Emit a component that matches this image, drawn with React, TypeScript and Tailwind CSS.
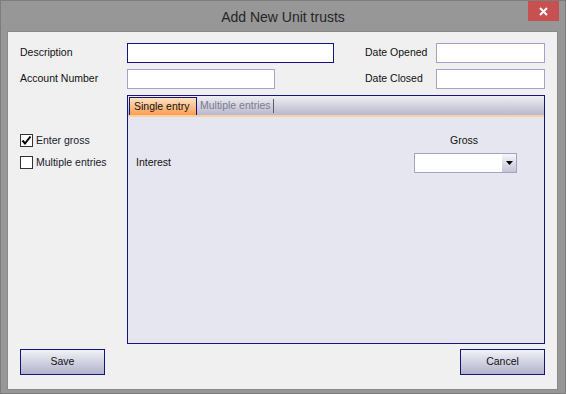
import React from "react";

const font = { fontFamily: '"Liberation Sans", Arial, sans-serif' };

function TextBox({ w, focused }: { w: string; focused?: boolean }) {
  return (
    <div
      className={`${w} h-[20px] bg-white border ${
        focused ? "border-[#14147e]" : "border-[#a6a1c7]"
      }`}
    />
  );
}

function CheckBox({ label, checked }: { label: string; checked?: boolean }) {
  return (
    <div className="flex items-center h-[13px] gap-[3px]">
      <div className="w-[13px] h-[13px] bg-white border border-[#333333] flex items-center justify-center">
        {checked && (
          <svg width="11" height="11" viewBox="0 0 11 11">
            <path d="M1.5 5.5 L4 8.5 L9.5 1.5" fill="none" stroke="#000" strokeWidth="2" />
          </svg>
        )}
      </div>
      <span className="text-[#1a1a2e] leading-[13px]">{label}</span>
    </div>
  );
}

function Button({ label }: { label: string }) {
  return (
    <div className="w-[85px] h-[26px] border border-[#14147e] bg-gradient-to-b from-[#f2f2f8] to-[#b3b3cc] flex items-center justify-center text-[#111]">
      {label}
    </div>
  );
}

export default function App() {
  return (
    <div
      className="w-[566px] h-[394px] bg-[#979797] border border-[#7d7d7d] box-border flex flex-col text-[10.5px]"
      style={font}
    >
      {/* Title bar */}
      <div className="relative h-[30px] flex items-center justify-center">
        <span className="text-[14px] text-[#262626] leading-[30px] pt-[1px]">Add New Unit trusts</span>
        <div className="absolute top-0 right-[6px] w-[31px] h-[20px] bg-[#c75050] flex items-center justify-center">
          <svg width="9" height="9" viewBox="0 0 9 9">
            <path d="M1 1 L8 8 M8 1 L1 8" stroke="#fff" strokeWidth="2" />
          </svg>
        </div>
      </div>

      {/* Content */}
      <div className="ml-[6px] mr-[7px] h-[359px] bg-[#f0f0f0] border border-[#8a8a8a] flex flex-col pt-[11px] px-[12px]">
        <div className="flex items-center h-[20px]">
          <span className="w-[107px] text-[#111]">Description</span>
          <TextBox w="w-[207px]" focused />
          <div className="flex-1" />
          <span className="w-[71px] text-[#111]">Date Opened</span>
          <TextBox w="w-[109px]" />
        </div>
        <div className="flex items-center h-[20px] mt-[6px]">
          <span className="w-[107px] text-[#111]">Account Number</span>
          <TextBox w="w-[148px]" />
          <div className="flex-1" />
          <span className="w-[71px] text-[#111]">Date Closed</span>
          <TextBox w="w-[109px]" />
        </div>

        <div className="flex mt-[6px] h-[249px]">
          <div className="w-[107px] pt-[39px] flex flex-col gap-[9px]">
            <CheckBox label="Enter gross" checked />
            <CheckBox label="Multiple entries" />
          </div>

          {/* Tab panel */}
          <div className="flex-1 border border-[#14147e] flex flex-col">
            <div className="h-[19px] bg-gradient-to-b from-[#eeeef4] to-[#b8b8cc] flex items-end">
              <div className="ml-[1px] w-[68px] h-[18px] border border-b-0 border-[#14147e] bg-gradient-to-b from-[#ffe2c2] to-[#ff9d4f] flex items-center pl-[4px] text-[#111]">
                Single entry
              </div>
              <div className="h-[18px] flex items-center pl-[3px] text-[#7c7c8c]">
                Multiple entries
              </div>
              <div className="ml-[2px] mb-[2px] w-[1px] h-[14px] bg-[#5a5a6a]" />
            </div>
            <div className="h-[2px] bg-[#fbcf9e]" />
            <div className="flex-1 bg-[#e6e6f0] pt-[17px] pl-[8px] pr-[27px]">
              <div className="flex justify-end">
                <span className="w-[103px] text-center pr-[3px] leading-[13px] text-[#111]">Gross</span>
              </div>
              <div className="flex items-center mt-[6px]">
                <span className="flex-1 text-[#111]">Interest</span>
                <div className="w-[103px] h-[20px] bg-white border border-[#a6a1c7] flex justify-end">
                  <div className="w-[14px] h-full bg-gradient-to-b from-[#f6f6fa] to-[#c4c4d6] flex items-center justify-center">
                    <svg width="7" height="4" viewBox="0 0 7 4">
                      <path d="M0 0 H7 L3.5 4 Z" fill="#000" />
                    </svg>
                  </div>
                </div>
              </div>
            </div>
          </div>
        </div>

        <div className="flex justify-between mt-[5px]">
          <Button label="Save" />
          <Button label="Cancel" />
        </div>
      </div>
    </div>
  );
}
